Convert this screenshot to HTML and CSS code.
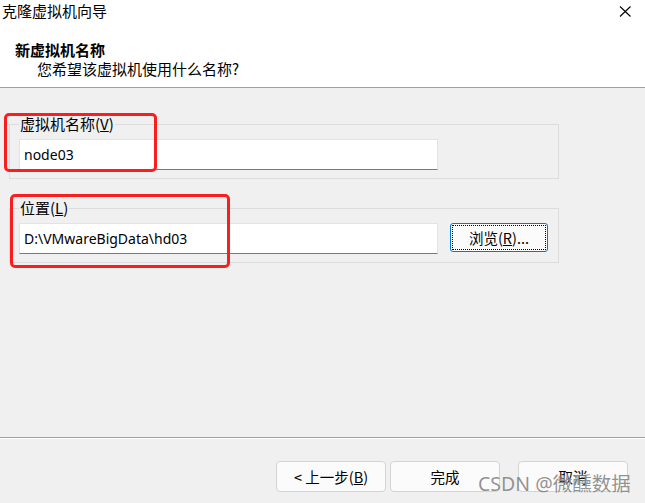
FILE: index.html
```html
<!DOCTYPE html>
<html lang="zh-CN">
<head>
<meta charset="utf-8">
<title>克隆虚拟机向导</title>
<link rel="stylesheet" href="styles.css">
</head>
<body>
<div class="window">
  <div class="top">
    <div class="titlebar">
      <span class="title">克隆虚拟机向导</span>
      <svg class="close" width="13" height="11" viewBox="0 0 13 11"><path d="M1 0.5 L11.5 10.5 M11.5 0.5 L1 10.5" stroke="#000" stroke-width="1.1" fill="none"/></svg>
    </div>
    <div class="header">
      <div class="h-title">新虚拟机名称</div>
      <div class="h-sub">您希望该虚拟机使用什么名称?</div>
    </div>
  </div>
  <div class="content">
    <fieldset class="group g1">
      <legend>虚拟机名称(<u>V</u>)</legend>
      <div class="row">
        <div class="input wide">node03</div>
      </div>
    </fieldset>
    <fieldset class="group g2">
      <legend>位置(<u>L</u>)</legend>
      <div class="row">
        <div class="input">D:\VMwareBigData\hd03</div>
        <button class="btn browse"><span class="focus">浏览(<u>R</u>)...</span></button>
      </div>
    </fieldset>
    <div class="mark m1"></div>
    <div class="mark m2"></div>
  </div>
  <div class="footer">
    <button class="btn">&lt; 上一步(<u>B</u>)</button>
    <button class="btn">完成</button>
    <button class="btn cancel">取消</button>
    <div class="watermark">CSDN @微醺数据</div>
  </div>
</div>
</body>
</html>
```
FILE: styles.css
```css
html, body {
  margin: 0;
  padding: 0;
  background: #f0f0f0;
}
body {
  font-family: "Noto Sans", "Noto Sans CJK SC", sans-serif;
  font-size: 14px;
  color: #000;
}
.window {
  width: 645px;
  height: 503px;
  display: flex;
  flex-direction: column;
  position: relative;
  overflow: hidden;
}
.top {
  background: #fff;
  height: 87px;
  border-bottom: 1px solid #a0a0a0;
  display: flex;
  flex-direction: column;
}
.titlebar {
  height: 22px;
  display: flex;
  align-items: center;
  justify-content: space-between;
  padding: 0 13px 0 2px;
}
.title {
  font-family: "Noto Sans CJK SC", sans-serif;
  font-size: 15px;
  line-height: 22px;
}
.close {
  display: block;
}
.header {
  padding: 18px 0 0 15px;
}
.h-title {
  font-family: "Noto Sans CJK SC", sans-serif;
  font-weight: bold;
  font-size: 15px;
  line-height: 20px;
}
.h-sub {
  font-family: "Noto Sans CJK SC", sans-serif;
  font-size: 15px;
  line-height: 18px;
  padding-left: 22px;
}
.content {
  flex: 1;
  position: relative;
  padding: 26px 0 0 9px;
  border-bottom: 1px solid #a0a0a0;
  box-shadow: 0 1px 0 #fff;
}
.group {
  width: 550px;
  margin: 0;
  padding: 5px 0 8px 9px;
  border: 1px solid #dcdcdc;
  box-sizing: border-box;
}
.group legend {
  font-family: "Noto Sans CJK SC", sans-serif;
  font-size: 15px;
  line-height: 20px;
  padding: 0 1px;
  margin-left: 0;
}
.g2 {
  margin-top: 19px;
}
.row {
  display: flex;
  align-items: flex-start;
  gap: 12px;
}
.input {
  width: 419px;
  height: 31px;
  box-sizing: border-box;
  background: #fff;
  border: 1px solid #e3e3e3;
  border-bottom: 1px solid #7a7a7a;
  padding: 0 0 0 4px;
  line-height: 29px;
  font-size: 14px;
}
.btn {
  font-family: "Noto Sans CJK SC", sans-serif;
  font-size: 14.5px;
  color: #000;
  width: 110px;
  height: 31px;
  background: #fbfbfb;
  border: 1px solid #d4d4d4;
  border-radius: 4px;
  padding: 0;
  box-sizing: border-box;
}
.browse {
  width: 98px;
  height: 29px;
  border: 1px solid #0078d7;
  border-radius: 3px;
  padding: 1px;
  display: flex;
}
.browse .focus {
  flex: 1;
  border: 1px dotted #000;
  display: flex;
  align-items: center;
  justify-content: center;
}
.mark {
  position: absolute;
  border: 3px solid #fa1e1e;
  border-radius: 5px;
  box-sizing: border-box;
}
.m1 {
  left: 4px;
  top: 25px;
  width: 153px;
  height: 59px;
}
.m2 {
  left: 10px;
  top: 106px;
  width: 220px;
  height: 74px;
}
.footer {
  height: 65px;
  display: flex;
  align-items: flex-start;
  padding: 23px 17px 0 0;
  justify-content: flex-end;
  position: relative;
  box-sizing: border-box;
}
.footer .btn + .btn {
  margin-left: 4px;
}
.footer .cancel {
  margin-left: 18px !important;
}
.watermark {
  position: absolute;
  left: 478px;
  top: 34px;
  font-family: "Noto Sans", "Noto Sans CJK SC", sans-serif;
  font-size: 19.5px;
  line-height: 24px;
  color: rgba(110, 110, 110, 0.75);
  text-shadow: 0 0 1px rgba(255,255,255,0.8);
  white-space: nowrap;
}
```
